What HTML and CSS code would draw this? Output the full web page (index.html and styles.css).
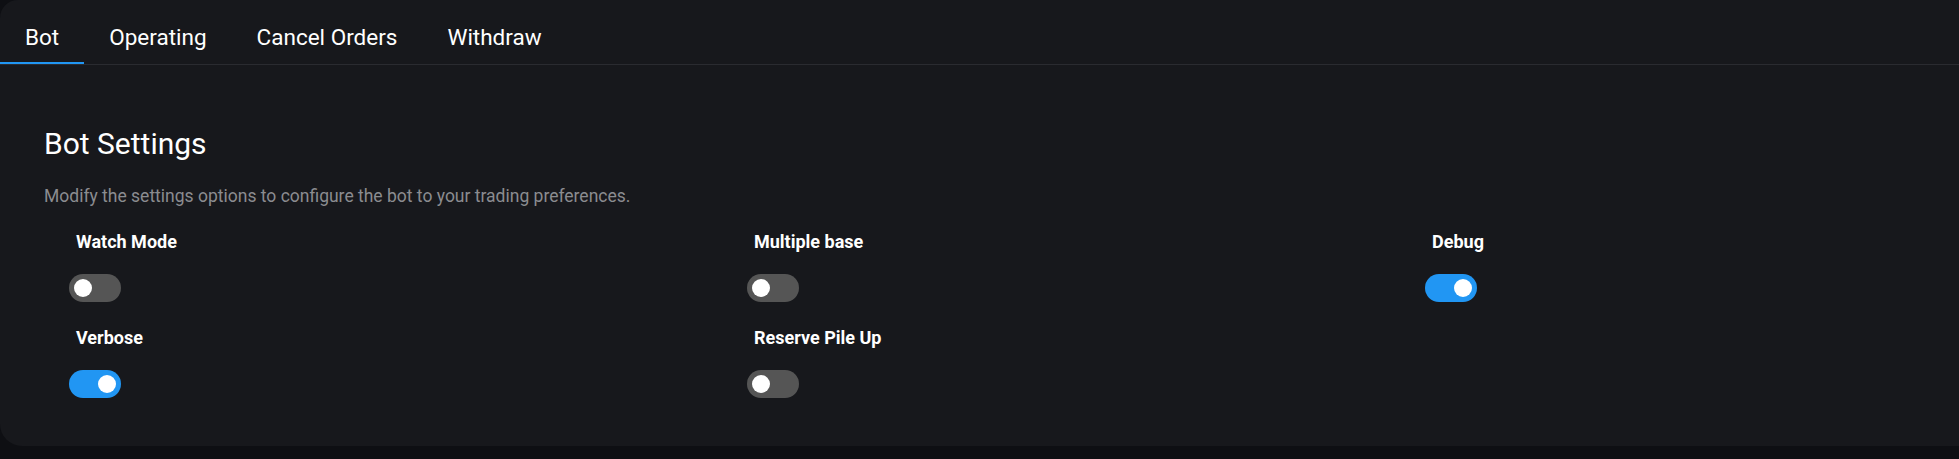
FILE: index.html
```html
<!DOCTYPE html>
<html>
<head>
<meta charset="utf-8">
<link rel="stylesheet" href="styles.css">
</head>
<body>
<div class="card">
  <div class="tabs">
    <div class="tab active">Bot</div>
    <div class="tab">Operating</div>
    <div class="tab">Cancel Orders</div>
    <div class="tab">Withdraw</div>
  </div>
  <div class="content">
    <h2 class="title">Bot Settings</h2>
    <p class="subtitle">Modify the settings options to configure the bot to your trading preferences.</p>
    <div class="grid">
      <div class="item"><div class="label">Watch Mode</div><div class="switch"><span class="knob"></span></div></div>
      <div class="item"><div class="label">Multiple base</div><div class="switch"><span class="knob"></span></div></div>
      <div class="item"><div class="label">Debug</div><div class="switch on"><span class="knob"></span></div></div>
      <div class="item"><div class="label">Verbose</div><div class="switch on"><span class="knob"></span></div></div>
      <div class="item"><div class="label">Reserve Pile Up</div><div class="switch"><span class="knob"></span></div></div>
    </div>
  </div>
</div>
</body>
</html>
```
FILE: styles.css
```css
html, body {
  margin: 0;
  padding: 0;
}
body {
  background: #0e0f13;
  font-family: Roboto, "Liberation Sans", sans-serif;
  color: #ffffff;
  overflow: hidden;
}
.card {
  background: #17181c;
  border-radius: 18px 0 0 22px;
  height: 446px;
  box-sizing: border-box;
  overflow: hidden;
}
.tabs {
  display: flex;
  height: 64px;
  border-bottom: 1px solid #2a2b30;
}
.tab {
  padding: 9px 25px 0;
  font-size: 22.5px;
  display: flex;
  align-items: center;
  color: #ffffff;
  box-sizing: border-box;
  height: 64px;
}
.tab.active {
  box-shadow: inset 0 -2px 0 #2196f3;
}
.content {
  padding: 61px 0 0 44px;
}
.title {
  margin: 0;
  font-size: 30px;
  font-weight: 400;
  line-height: 36px;
}
.subtitle {
  margin: 22px 0 0;
  font-size: 17.5px;
  line-height: 24px;
  color: #8b8c90;
}
.grid {
  display: grid;
  grid-template-columns: 678px 678px 1fr;
  row-gap: 26px;
  margin: 24px 0 0 25px;
}
.item {
  display: flex;
  flex-direction: column;
  align-items: flex-start;
}
.label {
  font-size: 18px;
  font-weight: 700;
  line-height: 20px;
  margin-left: 7px;
}
.switch {
  margin-top: 22px;
  width: 52px;
  height: 28px;
  border-radius: 14px;
  background: #555555;
  position: relative;
}
.switch.on {
  background: #2196f3;
}
.knob {
  position: absolute;
  top: 5px;
  left: 5px;
  width: 18px;
  height: 18px;
  border-radius: 50%;
  background: #ffffff;
}
.switch.on .knob {
  left: 29px;
}
```
